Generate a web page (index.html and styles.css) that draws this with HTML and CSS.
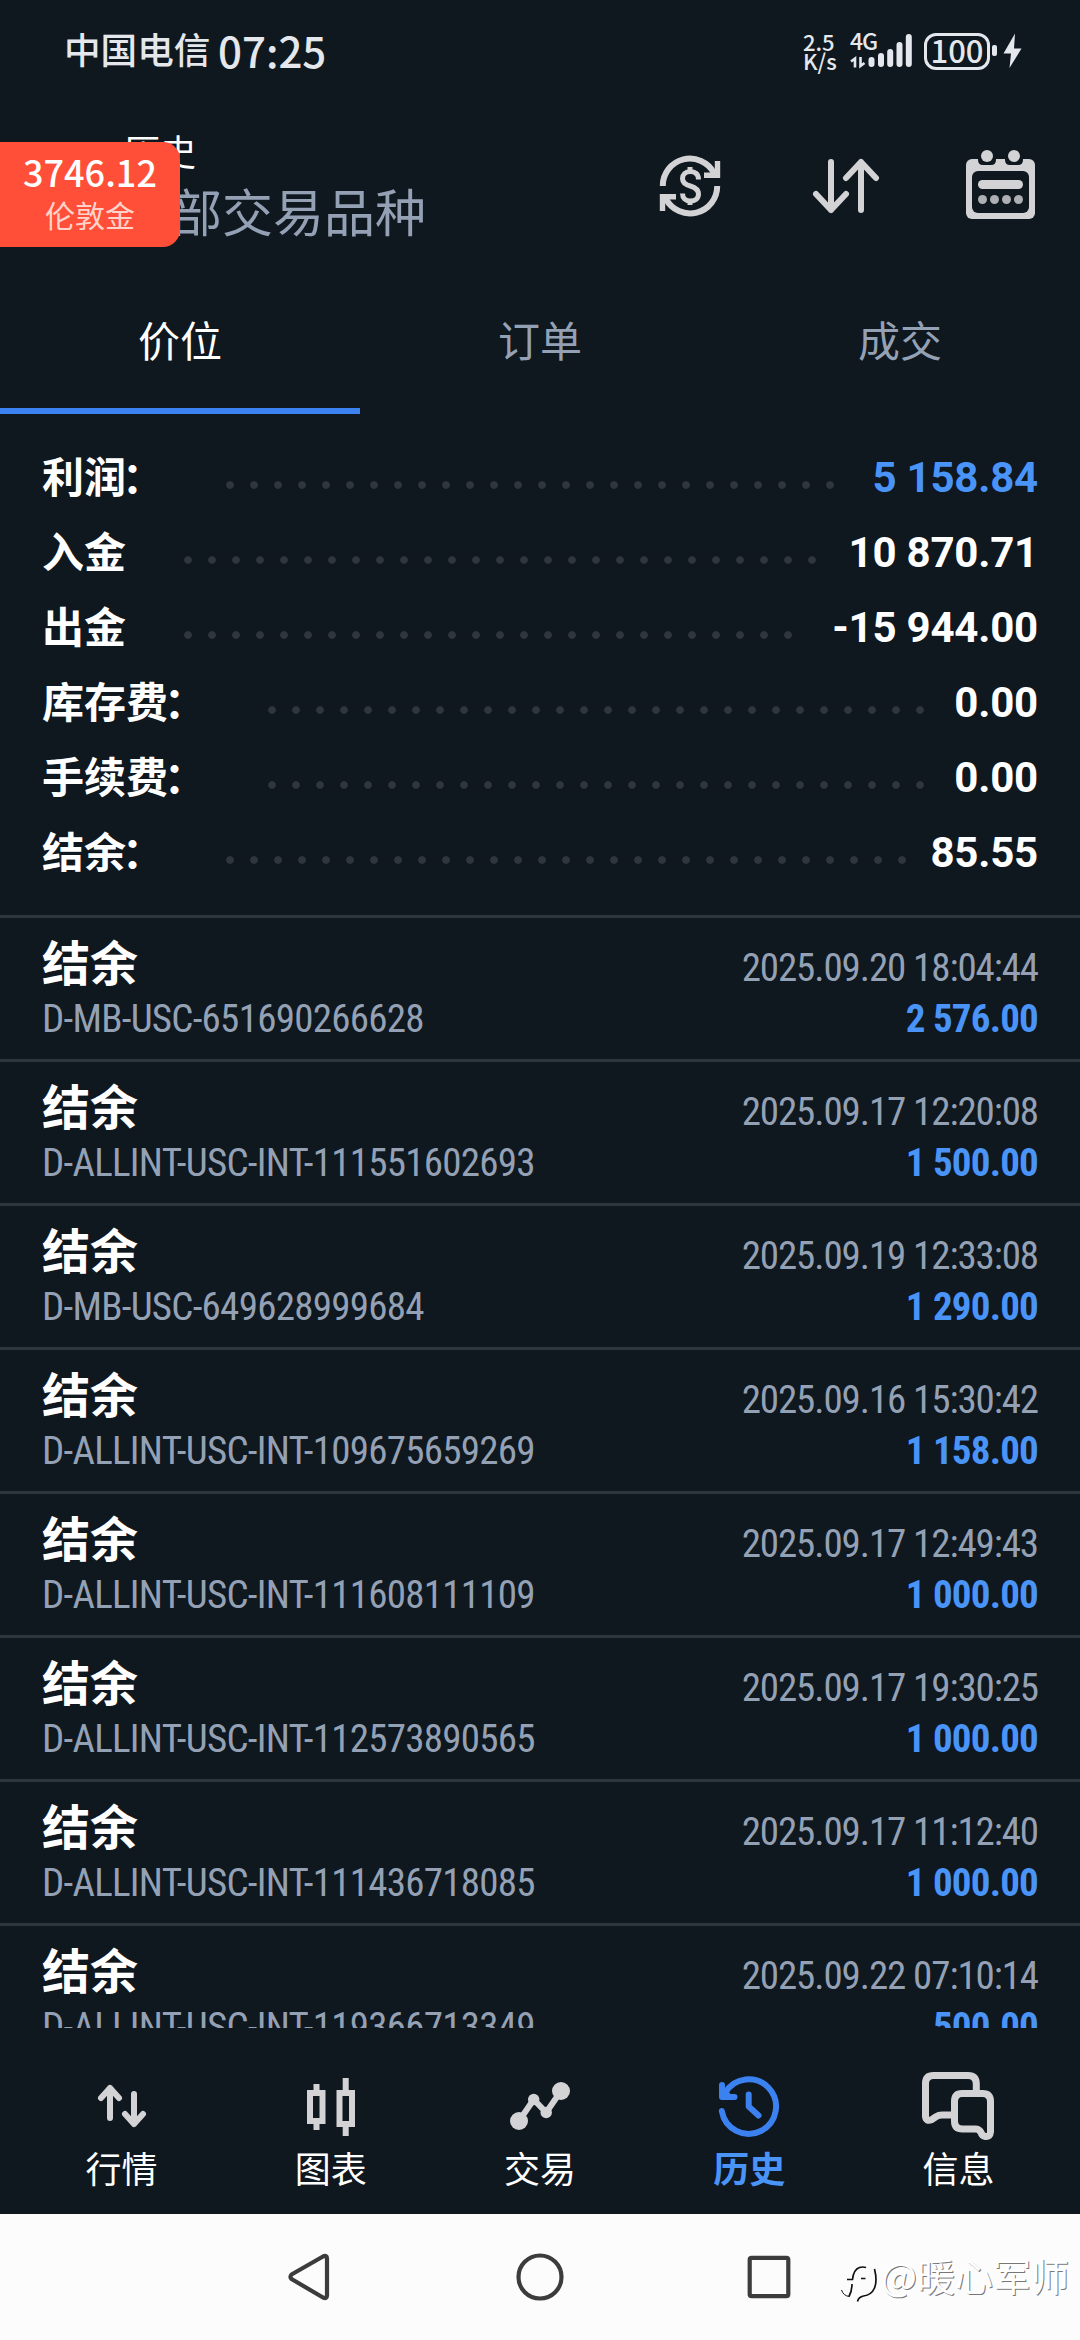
FILE: index.html
```html
<!DOCTYPE html>
<html lang="zh-CN">
<head>
<meta charset="utf-8">
<title>历史</title>
<link rel="stylesheet" href="styles.css">
</head>
<body>
<div class="screen">
  <div class="statusbar">
    <div class="carrier">中国电信</div>
    <div class="clock">07:25</div>
    <div class="speed"><span>2.5</span><span>K/s</span></div>
    <div class="signal">
      <span class="net">4G</span>
      <svg class="bars" viewBox="850 32 64 38" width="64" height="38">
        <g stroke="#e4e8ec" stroke-width="6" stroke-linecap="round">
          <path d="M871.5 60v4M881 56v8M890.2 52v12M899.5 45v19M908.8 37v27"/>
        </g>
        <path d="M851 61.500l4-3v9M864.500 63l-4 3v-9" fill="none" stroke="#e4e8ec" stroke-width="2.600"/>
      </svg>
    </div>
    <div class="battery">100</div>
    <svg class="bolt" viewBox="991 32 31 38" width="31" height="38">
      <rect x="992" y="45" width="5" height="11" rx="2" fill="#e4e8ec"/>
      <path d="M1015 33.500L1003.500 53.500h7.500l-1.500 14.500 12-19.500h-7.500z" fill="#e4e8ec"/>
    </svg>
  </div>

  <header class="header">
    <div class="titles">
      <div class="title">历史</div>
      <div class="subtitle">全部交易品种</div>
    </div>
    <svg class="i-currency" viewBox="659 155 62 62" width="62" height="62" fill="none" stroke="#d3d3d5">
      <path stroke-width="6" d="M662.800 186A27.200 27.200 0 0 1 714 173M717.200 186A27.200 27.200 0 0 1 666 199"/>
      <path stroke-width="5.400" d="M717.500 161V175.300H704M662.500 211V196.700H676"/>
      <path fill="#d3d3d5" stroke="none" d="M709 178l9-11v11zM671 194l-9 11v-11z"/>
      <path stroke-width="5" d="M698.500 179.500C698.500 174 695 171.500 690.300 171.500C685.500 171.500 682.500 174.500 682.500 178.500C682.500 183 686 184.800 690.300 186C695.500 187.500 698.500 190 698.500 194.300C698.500 198.500 695 201 690.300 201C685.500 201 682.500 198 682.500 193.500M690 167v5M690 200.500v4.500"/>
    </svg>
    <svg class="i-sort" viewBox="812 158 68 56" width="68" height="56" fill="none" stroke="#d3d3d5" stroke-width="6" stroke-linecap="round" stroke-linejoin="round">
      <path d="M831 162V210M816 194L831 210L846 194M861 210V162M846 178L861 162L876 178"/>
    </svg>
    <svg class="i-calendar" viewBox="966 149 70 71" width="70" height="71">
      <rect x="966" y="159" width="69" height="60" rx="6" fill="#d3d3d5"/>
      <rect x="972" y="171" width="57" height="42" rx="6" fill="#0f171f"/>
      <path d="M978 150h18v10q0 5-5 5h-8q-5 0-5-5zM1005 150h18v10q0 5-5 5h-8q-5 0-5-5z" fill="#0f171f"/>
      <g fill="#d3d3d5"><circle cx="987" cy="156" r="6"/><circle cx="1014" cy="156" r="6"/><rect x="978" y="180" width="45" height="9" rx="4.500"/></g>
      <g fill="#aeafb2"><circle cx="982.500" cy="199.500" r="4.500"/><circle cx="994.500" cy="199.500" r="4.500"/><circle cx="1006.500" cy="199.500" r="4.500"/><circle cx="1018.500" cy="199.500" r="4.500"/></g>
    </svg>
  </header>

  <nav class="tabs">
    <div class="tab active">价位</div>
    <div class="tab">订单</div>
    <div class="tab">成交</div>
  </nav>

  <section class="summary">
    <div class="sum"><span class="k">利润<span class="colon">：</span></span><i class="dots" style="--n:26"></i><span class="v blue">5 158.84</span></div>
    <div class="sum"><span class="k">入金</span><i class="dots" style="--n:27"></i><span class="v">10 870.71</span></div>
    <div class="sum"><span class="k">出金</span><i class="dots" style="--n:26"></i><span class="v">-15 944.00</span></div>
    <div class="sum"><span class="k">库存费<span class="colon">：</span></span><i class="dots" style="--n:28"></i><span class="v">0.00</span></div>
    <div class="sum"><span class="k">手续费<span class="colon">：</span></span><i class="dots" style="--n:28"></i><span class="v">0.00</span></div>
    <div class="sum"><span class="k">结余<span class="colon">：</span></span><i class="dots" style="--n:29"></i><span class="v">85.55</span></div>
  </section>

  <main class="list">
    <div class="deal"><div class="l"><b>结余</b><span class="id">D-MB-USC-651690266628</span></div><div class="r"><span class="date">2025.09.20 18:04:44</span><span class="amt">2 576.00</span></div></div>
    <div class="deal"><div class="l"><b>结余</b><span class="id">D-ALLINT-USC-INT-111551602693</span></div><div class="r"><span class="date">2025.09.17 12:20:08</span><span class="amt">1 500.00</span></div></div>
    <div class="deal"><div class="l"><b>结余</b><span class="id">D-MB-USC-649628999684</span></div><div class="r"><span class="date">2025.09.19 12:33:08</span><span class="amt">1 290.00</span></div></div>
    <div class="deal"><div class="l"><b>结余</b><span class="id">D-ALLINT-USC-INT-109675659269</span></div><div class="r"><span class="date">2025.09.16 15:30:42</span><span class="amt">1 158.00</span></div></div>
    <div class="deal"><div class="l"><b>结余</b><span class="id">D-ALLINT-USC-INT-111608111109</span></div><div class="r"><span class="date">2025.09.17 12:49:43</span><span class="amt">1 000.00</span></div></div>
    <div class="deal"><div class="l"><b>结余</b><span class="id">D-ALLINT-USC-INT-112573890565</span></div><div class="r"><span class="date">2025.09.17 19:30:25</span><span class="amt">1 000.00</span></div></div>
    <div class="deal"><div class="l"><b>结余</b><span class="id">D-ALLINT-USC-INT-111436718085</span></div><div class="r"><span class="date">2025.09.17 11:12:40</span><span class="amt">1 000.00</span></div></div>
    <div class="deal"><div class="l"><b>结余</b><span class="id">D-ALLINT-USC-INT-119366713349</span></div><div class="r"><span class="date">2025.09.22 07:10:14</span><span class="amt">500.00</span></div></div>
  </main>

  <nav class="bottom">
    <div class="item">
      <svg viewBox="82 2070 80 72" width="80" height="72" fill="none" stroke="#d3d3d5" stroke-width="6" stroke-linecap="round" stroke-linejoin="round"><path d="M110 2118V2088M101 2098L110 2088L119 2098M134 2094V2124M125 2114L134 2124L143 2114"/></svg>
      <span>行情</span>
    </div>
    <div class="item">
      <svg viewBox="291 2070 80 72" width="80" height="72" fill="none" stroke="#d3d3d5" stroke-width="6"><path d="M310 2093h12.500v28h-12.500zM339.500 2093h12.500v31h-12.500zM316.500 2084v7M316.500 2124v6M345.700 2078v13M345.700 2126v10"/></svg>
      <span>图表</span>
    </div>
    <div class="item">
      <svg viewBox="500 2070 80 72" width="80" height="72" fill="#d3d3d5"><path d="M519 2121L533.700 2099.500L546.200 2112.500L561 2091" fill="none" stroke="#d3d3d5" stroke-width="6"/><circle cx="519" cy="2121" r="9"/><circle cx="533.700" cy="2099.500" r="5.700"/><circle cx="546.200" cy="2112.500" r="5.700"/><circle cx="561" cy="2091" r="9"/></svg>
      <span>交易</span>
    </div>
    <div class="item active">
      <svg viewBox="709 2070 80 72" width="80" height="72" fill="none" stroke="#3b82f0" stroke-width="6" stroke-linecap="round" stroke-linejoin="round"><path d="M721.800 2111A27.300 27.300 0 1 0 725 2093"/><path d="M722 2085V2097H734.500" /><path fill="#3b82f0" stroke="none" d="M720 2088l9 4 4 6h-13z"/><path d="M748.700 2094.500V2106.500L758.500 2115.500"/></svg>
      <span>历史</span>
    </div>
    <div class="item">
      <svg viewBox="918 2070 80 72" width="80" height="72" fill="none" stroke="#d3d3d5" stroke-width="7"><path d="M976.300 2092V2084Q976.300 2075.500 968 2075.500H933.500Q925.500 2075.500 925.500 2083.500V2116.500Q926 2122 932 2119.500L936.500 2116.500Q938.500 2115 942 2115H952"/><path d="M962 2093.500H982.500Q990.500 2093.500 990.500 2101.500V2132Q990 2137 985.500 2136.500Q982 2136 981 2132.500Q979.500 2129 975 2129H962.500Q954.500 2129 954.500 2121V2101.500Q954.500 2093.500 962 2093.500Z"/></svg>
      <span>信息</span>
    </div>
  </nav>

  <footer class="sysnav">
    <svg viewBox="286 2252 46 50" width="46" height="50" fill="none" stroke="#3c3c3c" stroke-width="4.200" stroke-linejoin="round"><path d="M291.500 2274.500Q289.500 2277 291.500 2279L323 2297.500Q327 2299.300 327 2295.500V2258.500Q327 2254.700 323 2256.500Z"/></svg>
    <svg viewBox="516 2253 48 48" width="48" height="48" fill="none" stroke="#3c3c3c" stroke-width="4.200"><circle cx="540" cy="2277" r="21.500"/></svg>
    <svg viewBox="747 2255 44 44" width="44" height="44" fill="none" stroke="#3c3c3c" stroke-width="4.200"><rect x="749.700" y="2257.800" width="38.600" height="38.400" rx="2"/></svg>
  </footer>

  <div class="quote"><strong>3746.12</strong><span>伦敦金</span></div>
  <div class="watermark">
    <svg viewBox="838 2260 40 46" width="40" height="46" fill="none" stroke="#111" stroke-width="1.700"><path d="M847 2280.500h5.500q1-10 7-12 3-1 6.500 0M861 2279.500h4.500M852 2285q0 7-3 12.500M874.500 2270q3 12 0 19-3 7-11 8-5 1-6 5.500"/><path d="M841.500 2291q2 6 8 6.500" stroke-width="1"/></svg>
    <span>@暖心军师</span>
  </div>
</div>
</body>
</html>
```
FILE: styles.css
```css
* { box-sizing: border-box; }
body { margin: 0; background: #0f171f; }
.screen {
  position: relative;
  width: 1080px;
  height: 2340px;
  overflow: hidden;
  display: flex;
  flex-direction: column;
  background: #0f171f;
  color: #fff;
  font-family: Roboto, "Noto Sans CJK SC", sans-serif;
}
svg { display: block; flex: none; }

.statusbar {
  height: 102px;
  display: flex;
  align-items: center;
  padding: 0 58px 0 64px;
  color: #e4e8ec;
  font-family: "Noto Sans CJK SC", sans-serif;
  font-weight: 500;
  line-height: 1;
}
.carrier { font-size: 36.6px; width: 154px; padding-bottom: 3px; }
.clock { font-size: 42px; flex: 1; padding-bottom: 2px; }
.speed { width: 47px; display: flex; flex-direction: column; font-size: 22px; line-height: 19px; padding-bottom: 1px; }
.signal { width: 74px; height: 38px; position: relative; }
.net { position: absolute; left: 0; top: -1px; font-size: 23px; line-height: 19px; letter-spacing: -1px; }
.battery {
  width: 66px;
  height: 37px;
  border: 3px solid #e4e8ec;
  border-radius: 12px;
  font-size: 31px;
  line-height: 28px;
  text-align: center;
}
.bolt { margin-left: 1px; }

.header { height: 189px; display: flex; padding-left: 120px; align-items: flex-start; }
.titles { width: 539px; padding-top: 28px; }
.title { font-size: 36px; line-height: 48px; padding-left: 4px; }
.subtitle { font-size: 51px; line-height: 74px; color: #94a1b5; }
.i-currency { margin-top: 53px; }
.i-sort { margin: 56px 0 0 91px; }
.i-calendar { margin: 47px 0 0 86px; }

.tabs { height: 123px; display: grid; grid-template-columns: repeat(3, 1fr); }
.tab { font-size: 42px; line-height: 103px; text-align: center; color: #94a1b5; }
.tab.active { color: #fff; border-bottom: 6px solid #3b82f0; }

.summary { height: 501px; padding: 25px 42px 0; }
.sum { height: 75px; display: flex; align-items: center; font-size: 42px; font-weight: 700; }
.k { font-family: "Noto Sans CJK SC", sans-serif; line-height: 75px; padding-bottom: 5px; }
.colon { margin: 0 4px 0 -4px; }
.dots {
  width: calc(var(--n) * 24px);
  height: 8px;
  margin: 17px 0 0 58px;
  background: radial-gradient(circle at 4px 4px, #2f363e 3.4px, transparent 4.2px) 0 0 / 24px 8px repeat-x;
}
.v { margin-left: auto; line-height: 75px; white-space: pre; letter-spacing: -.2px; padding-top: 1px; }
.blue { color: #4a94f8; }

.list { height: 1113px; overflow: hidden; }
.deal {
  height: 144px;
  border-top: 3px solid #2d353f;
  display: flex;
  justify-content: space-between;
  padding: 0 42px;
}
.l, .r { display: flex; flex-direction: column; }
.r { align-items: flex-end; }
.deal b { font-family: "Noto Sans CJK SC", sans-serif; font-size: 48px; line-height: 60px; padding-top: 12px; height: 76px; }
.id, .date, .amt { font-size: 39px; line-height: 51px; font-stretch: 75%; white-space: pre; }
.id { color: #94a1b5; letter-spacing: -.74px; }
.date { color: #94a1b5; padding-top: 25px; letter-spacing: -1.1px; }
.amt { color: #4a94f8; font-weight: 700; letter-spacing: -.8px; }

.bottom { height: 186px; display: grid; grid-template-columns: repeat(5, 1fr); padding: 42px 17px 0; }
.item { display: flex; flex-direction: column; align-items: center; font-size: 36px; }
.item span { line-height: 58px; }
.item.active span { color: #4a94f8; font-weight: 700; }

.sysnav {
  height: 126px;
  background: #fcfcfc;
  display: flex;
  justify-content: space-between;
  align-items: center;
  padding: 0 289px 0 286px;
}

.quote {
  position: absolute;
  left: 0;
  top: 142px;
  width: 180px;
  height: 105px;
  border-radius: 0 17px 17px 0;
  background: #ff4f38;
  text-align: center;
  display: flex;
  flex-direction: column;
  font-family: "Noto Sans CJK SC", sans-serif;
}
.quote strong { font-size: 36px; font-weight: 500; line-height: 52px; padding-top: 3px; height: 52px; }
.quote span { font-size: 30px; line-height: 40px; color: #ffd3ca; }

.watermark {
  position: absolute;
  left: 838px;
  top: 2247px;
  height: 56px;
  display: flex;
  align-items: center;
  gap: 3px;
  font: 38px/56px "Noto Sans CJK SC", sans-serif;
  color: #fff;
  text-shadow: 1px 1px 0 #777;
}
.watermark svg { margin-top: 14px; }
```
